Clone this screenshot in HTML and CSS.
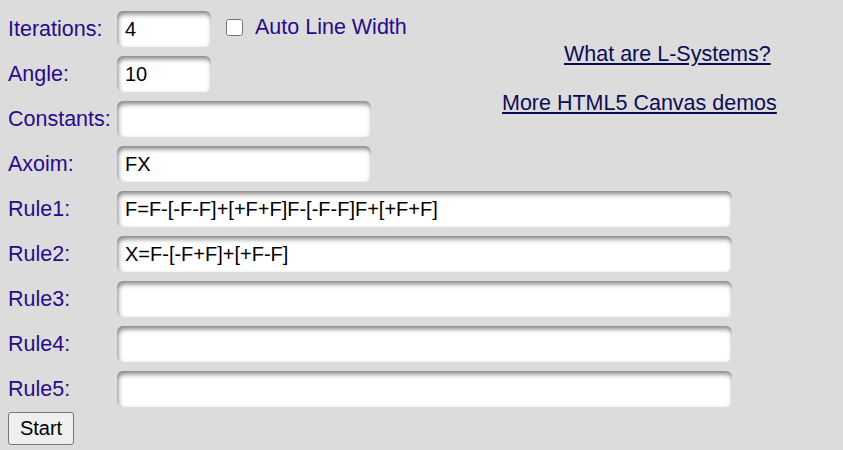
FILE: index.html
```html
<!DOCTYPE html>
<html>
<head>
<meta charset="utf-8">
<title>L-Systems</title>
<link rel="stylesheet" href="styles.css">
</head>
<body>
<div class="top">
  <div class="fields">
    <div class="row">
      <label class="lbl">Iterations:</label>
      <div class="cell">
        <input class="inp small" type="text" value="4">
        <label class="auto"><input class="chk" type="checkbox"><span>Auto Line Width</span></label>
      </div>
    </div>
    <div class="row">
      <label class="lbl">Angle:</label>
      <div class="cell"><input class="inp small" type="text" value="10"></div>
    </div>
    <div class="row">
      <label class="lbl">Constants:</label>
      <div class="cell"><input class="inp medium" type="text" value=""></div>
    </div>
    <div class="row">
      <label class="lbl">Axoim:</label>
      <div class="cell"><input class="inp medium" type="text" value="FX"></div>
    </div>
  </div>
  <div class="links">
    <a class="link first" href="#">What are L-Systems?</a>
    <a class="link" href="#">More HTML5 Canvas demos</a>
  </div>
</div>
<div class="fields rules">
  <div class="row">
    <label class="lbl">Rule1:</label>
    <div class="cell"><input class="inp wide" type="text" value="F=F-[-F-F]+[+F+F]F-[-F-F]F+[+F+F]"></div>
  </div>
  <div class="row">
    <label class="lbl">Rule2:</label>
    <div class="cell"><input class="inp wide" type="text" value="X=F-[-F+F]+[+F-F]"></div>
  </div>
  <div class="row">
    <label class="lbl">Rule3:</label>
    <div class="cell"><input class="inp wide" type="text" value=""></div>
  </div>
  <div class="row">
    <label class="lbl">Rule4:</label>
    <div class="cell"><input class="inp wide" type="text" value=""></div>
  </div>
  <div class="row">
    <label class="lbl">Rule5:</label>
    <div class="cell"><input class="inp wide" type="text" value=""></div>
  </div>
</div>
<button class="start" type="button">Start</button>
</body>
</html>
```

FILE: styles.css
```css
html, body {
  background: #dcdcdc;
}
body {
  margin: 8px;
  font-family: "Liberation Sans", Arial, sans-serif;
  font-size: 21.5px;
  color: #2a0a88;
}
.top {
  display: grid;
  grid-template-columns: 494px auto;
  padding-top: 3px;
}
.fields {
  display: flex;
  flex-direction: column;
  gap: 9px;
}
.rules {
  margin-top: 9px;
}
.row {
  display: grid;
  grid-template-columns: 109px auto;
  align-items: center;
  height: 36px;
}
.lbl {
  line-height: normal;
}
.cell {
  display: flex;
  align-items: center;
}
.inp {
  box-sizing: border-box;
  height: 36px;
  border: none;
  border-radius: 6px;
  background: #fff;
  box-shadow: inset 1px 3px 5px rgba(0, 0, 0, 0.5);
  padding: 0 8px;
  font-family: "Liberation Sans", Arial, sans-serif;
  font-size: 20px;
  color: #000;
  outline: none;
}
.small { width: 94px; }
.medium { width: 254px; }
.wide { width: 615px; }
.auto {
  display: flex;
  align-items: center;
  margin-left: 15px;
  margin-top: -4px;
}
.chk {
  width: 17px;
  height: 17px;
  margin: 0 12px 0 0;
}
.links {
  display: flex;
  flex-direction: column;
  align-items: flex-start;
  padding-top: 31px;
  gap: 24px;
}
.link {
  color: #0c0c55;
  text-decoration: underline;
  line-height: normal;
}
.first {
  margin-left: 62px;
}
.start {
  margin-top: 5px;
  font-family: "Liberation Sans", Arial, sans-serif;
  font-size: 20px;
  color: #000;
  background: #efefef;
  border: 1px solid #767676;
  border-radius: 3px;
  padding: 2px 10px;
  width: 66px;
  height: 33px;
}
```
